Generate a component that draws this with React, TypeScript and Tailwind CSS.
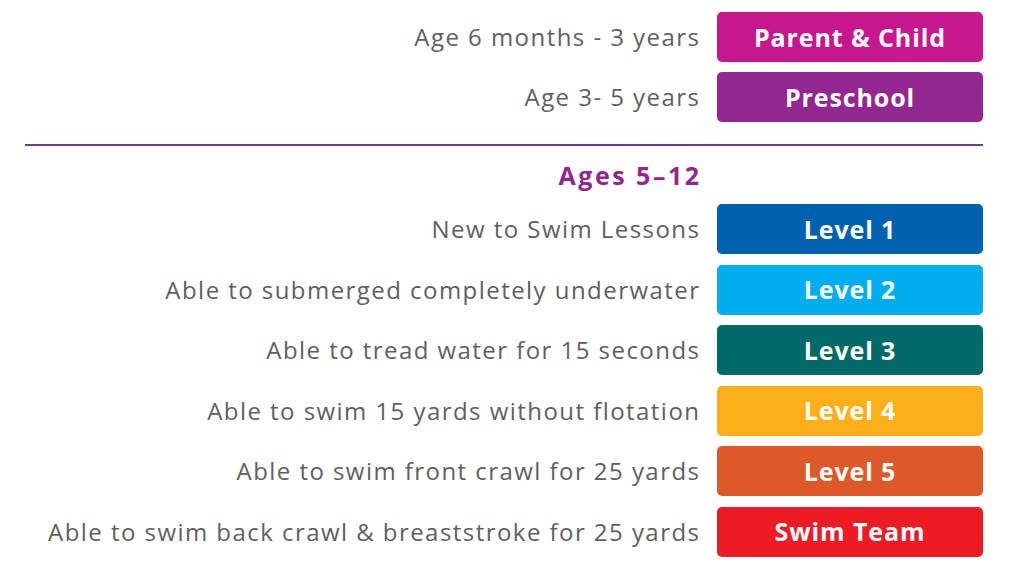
import React from "react";

const top = [
  { desc: "Age 6 months - 3 years", label: "Parent & Child", color: "bg-[#c7178e]" },
  { desc: "Age 3- 5 years", label: "Preschool", color: "bg-[#92278f]" },
];

const levels = [
  { desc: "New to Swim Lessons", label: "Level 1", color: "bg-[#0061ae]" },
  { desc: "Able to submerged completely underwater", label: "Level 2", color: "bg-[#00aeef]" },
  { desc: "Able to tread water for 15 seconds", label: "Level 3", color: "bg-[#006b66]" },
  { desc: "Able to swim 15 yards without flotation", label: "Level 4", color: "bg-[#fbb01b]" },
  { desc: "Able to swim front crawl for 25 yards", label: "Level 5", color: "bg-[#dd5a28]" },
  { desc: "Able to swim back crawl & breaststroke for 25 yards", label: "Swim Team", color: "bg-[#ed1c24]" },
];

function Row({ desc, label, color }: { desc: string; label: string; color: string }) {
  return (
    <div className="flex items-center justify-end gap-[18px] h-[50px]">
      <div className="text-[24px] text-[#5f5f5f] leading-none tracking-[1.45px] mr-[-1.45px]">{desc}</div>
      <div className={`${color} w-[266px] h-[50px] rounded-[5px] flex items-center justify-center text-white font-bold text-[25px] leading-none tracking-[0.9px]`}>
        {label}
      </div>
    </div>
  );
}

export default function App() {
  return (
    <div className="w-[1024px] h-[576px] bg-white overflow-hidden" style={{ fontFamily: '"Open Sans", sans-serif' }}>
      <div className="w-[983px] pl-[25px] pt-[12px]">
        <div className="flex flex-col gap-[10px]">
          {top.map((r) => (
            <Row key={r.label} {...r} />
          ))}
        </div>
        <div className="mt-[22px] h-[2px] bg-[#6a3b9c]" />
        <div className="flex justify-end pr-[284px] mt-[14px] h-[30px] items-center">
          <span className="text-[#92278f] font-bold text-[25px] leading-none tracking-[2.5px] mr-[-2.5px]">Ages 5–12</span>
        </div>
        <div className="flex flex-col gap-[10.6px] mt-[14px]">
          {levels.map((r) => (
            <Row key={r.label} {...r} />
          ))}
        </div>
      </div>
    </div>
  );
}
